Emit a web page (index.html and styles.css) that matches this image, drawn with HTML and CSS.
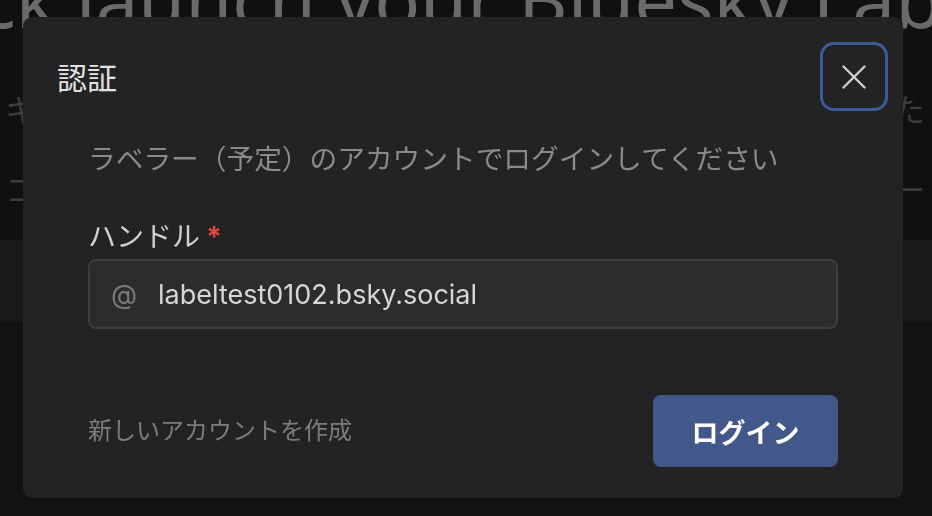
FILE: index.html
```html
<!DOCTYPE html>
<html lang="ja">
  <head>
    <meta charset="UTF-8" />
    <meta name="viewport" content="width=device-width, initial-scale=1.0" />
    <title>Quick launch your Bluesky Labeler</title>
    <link rel="stylesheet" href="styles.css">
  </head>
  <body>
    <!-- page behind the dialog -->
    <div class="page">
      <div class="hero">
        <h1>Quick launch your Bluesky Labeler</h1>
        <p class="lead">
          キーボード操作だけで自分専用のラベラーをすぐに作れました<br>
          コードを書かずに定義から公開まで完了できるラベラー
        </p>
      </div>
      <div class="band"></div>
    </div>

    <!-- auth dialog -->
    <div class="modal" role="dialog">
      <div class="modal-header">
        <h2>認証</h2>
        <button class="close-btn" aria-label="閉じる">
          <svg width="24" height="24" viewBox="0 0 24 24">
            <path d="M1.5 1.5 L22.5 22.5 M22.5 1.5 L1.5 22.5" stroke="#cfcfcf" stroke-width="2.4" stroke-linecap="round" fill="none"/>
          </svg>
        </button>
      </div>

      <div class="modal-body">
        <p class="desc">ラベラー（予定）のアカウントでログインしてください</p>

        <label class="field-label">ハンドル <span class="req">*</span></label>
        <div class="input">
          <span class="input-prefix">@</span>
          <span class="input-value">labeltest0102.bsky.social</span>
        </div>
      </div>

      <div class="modal-footer">
        <a class="signup-link">新しいアカウントを作成</a>
        <button class="login-btn">ログイン</button>
      </div>
    </div>
  </body>
</html>
```

FILE: styles.css
```css
* {
  margin: 0;
  padding: 0;
  box-sizing: border-box;
}

body {
  font-family: 'Noto Sans', 'Noto Sans CJK JP', sans-serif;
  background: #121212;
  color: #e0e0e0;
  width: 932px;
  height: 516px;
  overflow: hidden;
}

/* 背景ページ (オーバーレイで暗くなっている) */
.hero {
  background: #101010;
  height: 240px;
  overflow: hidden;
}

.hero h1 {
  font-family: 'Noto Sans', sans-serif;
  font-weight: 400;
  font-size: 76px;
  line-height: 1;
  color: #6a6a6a;
  white-space: nowrap;
  text-align: center;
  margin-top: -39px;
  margin-left: -200px;
  margin-right: -200px;
}

.lead {
  font-family: 'Noto Sans CJK JP', sans-serif;
  font-size: 32px;
  line-height: 80px;
  color: #3c3c3c;
  margin-top: 31px;
  padding: 0 7px 0 5px;
  text-align: justify;
  text-align-last: justify;
}

.band {
  height: 82px;
  background: #1a1a1a;
}

/* ダイアログ */
.modal {
  position: fixed;
  top: 17px;
  left: 23px;
  width: 880px;
  height: 481px;
  background: #232323;
  border-radius: 9px;
  display: flex;
  flex-direction: column;
  font-family: 'Noto Sans CJK JP', sans-serif;
}

.modal-header {
  display: flex;
  justify-content: space-between;
  align-items: center;
  padding: 25px 15px 0 34px;
}

.modal-header h2 {
  font-size: 30px;
  font-weight: 400;
  line-height: 1;
  color: #e2e2e2;
  margin-top: -2px;
}

.close-btn {
  width: 68px;
  height: 69px;
  border: 3px solid #3f5a98;
  border-radius: 14px;
  background: transparent;
  display: flex;
  align-items: center;
  justify-content: center;
}

.modal-body {
  padding: 0 65px;
  display: flex;
  flex-direction: column;
}

.desc {
  font-size: 27.7px;
  line-height: 40px;
  color: #8a8a8a;
  margin-top: 26px;
  white-space: nowrap;
}

.field-label {
  font-size: 28px;
  line-height: 36px;
  color: #d0d0d0;
  margin-top: 40px;
}

.req {
  color: #e5483f;
  font-family: 'Inter', sans-serif;
  font-weight: 700;
}

.input {
  margin-top: 4px;
  height: 70px;
  background: #2c2c2c;
  border: 2px solid #3e3e3e;
  border-radius: 8px;
  display: flex;
  align-items: center;
  padding-left: 21px;
  font-family: 'Inter', 'Noto Sans', sans-serif;
  font-size: 27px;
}

.input-prefix {
  color: #7a7a7a;
  width: 47px;
}

.input-value {
  color: #d6d6d6;
}

.modal-footer {
  margin-top: auto;
  padding: 0 65px 31px;
  display: flex;
  justify-content: space-between;
  align-items: center;
}

.signup-link {
  font-size: 24px;
  color: #7c7c7c;
  margin-top: -6px;
}

.login-btn {
  width: 185px;
  height: 72px;
  background: #42588b;
  border: none;
  border-radius: 8px;
  color: #ffffff;
  font-family: 'Noto Sans CJK JP', sans-serif;
  font-size: 27px;
  font-weight: 700;
}
```
